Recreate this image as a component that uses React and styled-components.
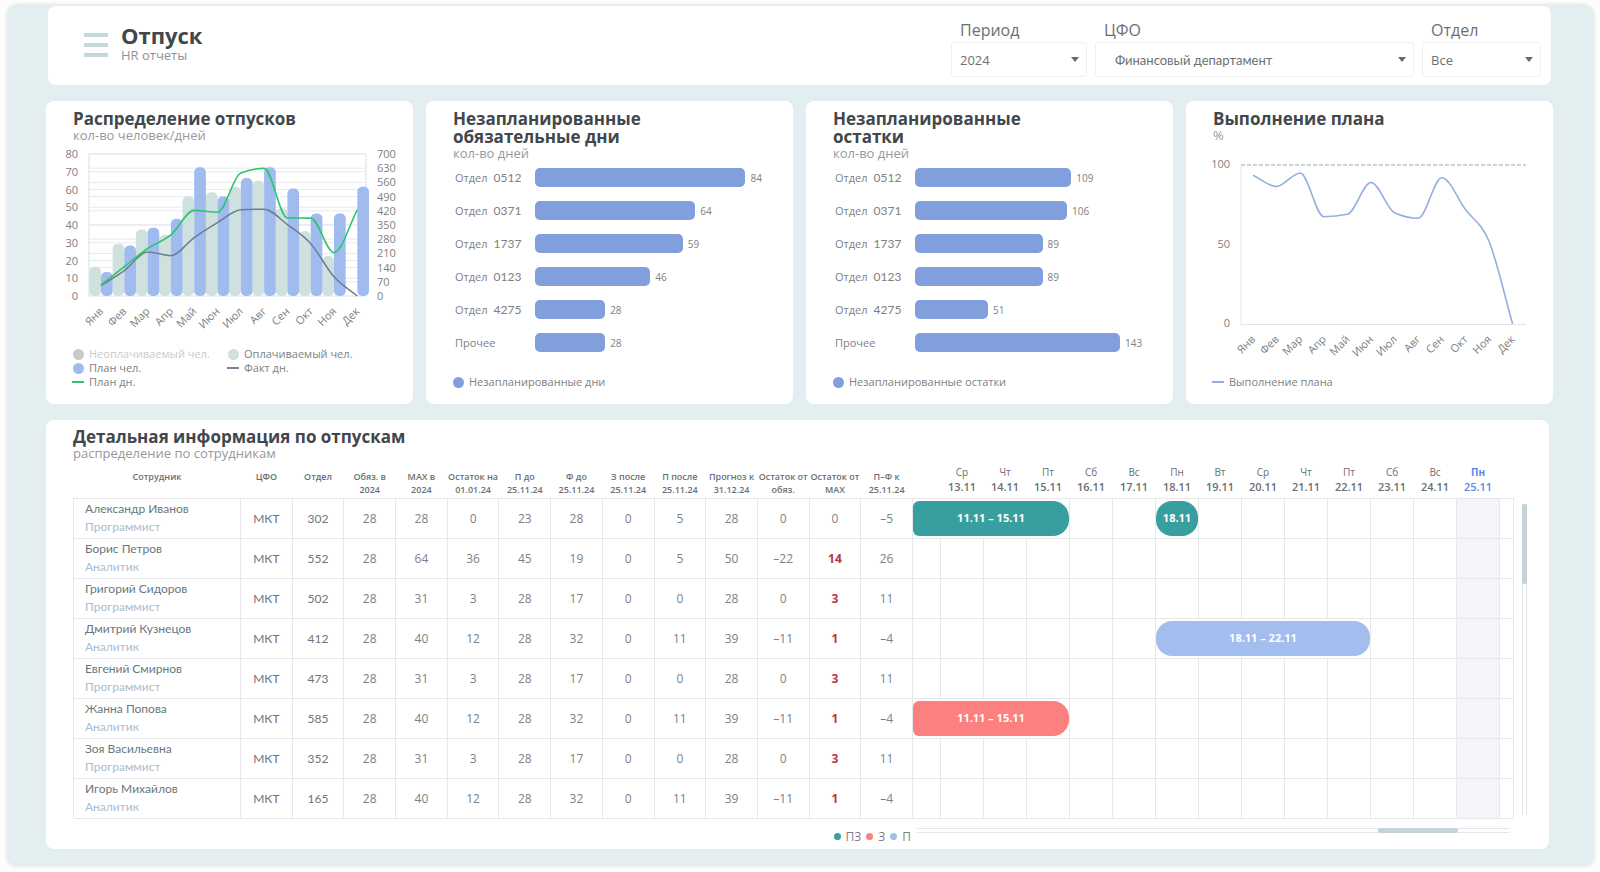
import React, { useState } from 'react';
import styled, { createGlobalStyle } from 'styled-components';

const GlobalStyle = createGlobalStyle`
  * {
    box-sizing: border-box;
  }

  body {
    margin: 0;
    background: #fdfdfd;
    color: #7d8184;
    font-family: 'Open Sans', 'Noto Sans', sans-serif;
    font-size: 12px;
  }
`;

const Page = styled.main`
  display: flex;
  flex-direction: column;
  gap: 16px;
  margin: 5px 6px 5px 7px;
  padding: 1px 41px 17px 39px;
  background: #e3eef0;
  border-radius: 10px;
  box-shadow: 0 0 4px rgba(0, 0, 0, 0.14);
`;

const Header = styled.header`
  display: flex;
  align-items: flex-start;
  margin: 0 2px;
  padding: 13px 10px 8px 36px;
  background: white;
  border-radius: 8px;
`;

const MenuButton = styled.button`
  display: flex;
  flex-direction: column;
  gap: 6px;
  margin: 14px 13px 0 0;
  padding: 0;
  border: none;
  background: none;
  cursor: pointer;
`;

const MenuLine = styled.span`
  width: 24px;
  height: 4px;
  background: #c5d6dc;
`;

const Heading = styled.div`
  flex: 1;
  padding-top: 3px;
`;

const PageTitle = styled.h1`
  margin: 0;
  color: #42474b;
  font-size: 22px;
  line-height: 26px;
`;

const PageSubtitle = styled.div`
  color: #8f9294;
  font-size: 13px;
  line-height: 14px;
`;

const Filters = styled.div`
  display: flex;
  gap: 8px;
`;

const Filter = styled.label`
  width: ${({ $width }) => $width}px;
`;

const FilterLabel = styled.div`
  padding-left: 9px;
  color: #6b6f72;
  font-size: 16px;
  line-height: 23px;
`;

const SelectBox = styled.div`
  position: relative;

  svg {
    position: absolute;
    top: 15px;
    right: 8px;
    pointer-events: none;
  }
`;

const Select = styled.select`
  width: 100%;
  height: 35px;
  padding: 0 24px 0 ${({ $inset }) => $inset || 8}px;
  border: 1px solid #f0f1f2;
  border-radius: 3px;
  background: white;
  color: #6b6f72;
  font-family: ${({ $inset }) => ($inset ? 'Lato' : "'Open Sans'")}, sans-serif;
  font-size: 13px;
  appearance: none;
`;

const Cards = styled.div`
  display: grid;
  grid-template-columns: repeat(4, 1fr);
  gap: 13px;
`;

const Card = styled.section`
  display: flex;
  flex-direction: column;
  min-height: 303px;
  padding: 9px 0 15px;
  background: white;
  border-radius: 8px;
`;

const CardTitle = styled.h2`
  max-width: 240px;
  margin: 0 26px 0 27px;
  color: #42474b;
  font-size: 17px;
  line-height: 18px;
`;

const CardSubtitle = styled.div`
  margin: 0 27px;
  color: #96999b;
  font-size: 13px;
  line-height: 14px;
`;

const Chart = styled.svg`
  display: block;
  width: 100%;
  height: auto;
  margin-top: 4px;

  text {
    fill: #7d8184;
    font-size: 11px;
  }
`;

const Legend = styled.ul`
  display: grid;
  grid-template-columns: ${({ $columns }) => $columns || 'auto'};
  margin: auto 26px 0;
  padding: 0;
  list-style: none;
`;

const LegendItem = styled.li`
  display: flex;
  align-items: center;
  gap: 5px;
  color: ${({ $muted }) => ($muted ? '#c9cbcc' : '#7d8184')};
  font-size: 11px;
  line-height: 14px;
  white-space: nowrap;
`;

const Dot = styled.span`
  width: 11px;
  height: 11px;
  margin-left: 1px;
  border-radius: 50%;
  background: ${({ $color }) => $color};
`;

const Dash = styled.span`
  width: 12px;
  height: 2px;
  background: ${({ $color }) => $color};
`;

const BarRows = styled.div`
  display: flex;
  flex-direction: column;
  gap: 14px;
  margin: 8px 10px 0 29px;
`;

const BarRow = styled.div`
  display: grid;
  grid-template-columns: 80px 1fr;
  align-items: center;
  height: 19px;
  font-size: 11px;
`;

const BarName = styled.div`
  display: flex;
  align-items: baseline;
  gap: 6px;
`;

const DepartmentCode = styled.span`
  font-family: Lato, sans-serif;
  font-size: 12px;
`;

const BarTrack = styled.div`
  display: flex;
  align-items: center;
  gap: 5px;
  font-size: 10px;
`;

const Bar = styled.div`
  height: 19px;
  border-radius: 5px;
  background: #819fdc;
`;

const Details = styled.section`
  margin-right: 4px;
  padding: 8px 22px 4px 27px;
  background: white;
  border-radius: 8px;
`;

const DetailsTitle = styled(CardTitle)`
  max-width: none;
  margin: 0;
`;

const DetailsSubtitle = styled(CardSubtitle)`
  margin: 0;
`;

const TableArea = styled.div`
  display: flex;
  gap: 8px;
  margin-top: 8px;
`;

const Table = styled.table`
  flex: 1;
  width: 100%;
  border-collapse: collapse;
  table-layout: fixed;
`;

const ColumnHead = styled.th`
  height: 30px;
  padding: 2px 0 0;
  color: #6b6f72;
  font-size: 9px;
  font-weight: 600;
  line-height: 13px;
  vertical-align: top;
  white-space: nowrap;
`;

const DayHead = styled(ColumnHead)`
  padding: 0 0 3px;
  color: ${({ $today }) => ($today ? '#5b86e5' : '#6b6f72')};
  font-size: 11px;
  line-height: 15px;
`;

const Weekday = styled.div`
  margin-top: -3px;
  font-size: 10px;
  font-weight: ${({ $today }) => ($today ? 700 : 400)};
  line-height: 14px;
`;

const Cell = styled.td`
  height: 40px;
  padding: 0;
  border: 1px solid #e6e8ea;
  background: ${({ $today }) => ($today ? '#f4f5fa' : 'none')};
  color: ${({ $alert }) => ($alert ? '#b3393d' : '#7d8184')};
  font-weight: ${({ $alert }) => ($alert ? 700 : 400)};
  text-align: center;
`;

const TextCell = styled(Cell)`
  color: #6b767c;
  font-family: Lato, sans-serif;
`;

const EmployeeCell = styled(TextCell)`
  padding-left: 11px;
  line-height: 18px;
  text-align: left;
`;

const Role = styled.div`
  color: #abbecb;
`;

const Vacation = styled.div`
  height: 35px;
  border-radius: ${({ $cut }) => ($cut ? '6px 16px 16px 6px' : '16px')};
  background: ${({ $color }) => $color};
  color: white;
  font-size: 11px;
  font-weight: 700;
  line-height: 34px;
`;

const VerticalScroll = styled.div`
  width: 5px;
  margin: 36px 0 4px;
  border: solid #dfe7ec;
  border-width: 0 1px;
`;

const VerticalThumb = styled.div`
  width: 5px;
  height: 80px;
  margin-left: -1px;
  border-radius: 2px;
  background: #c5d3d9;
`;

const Footer = styled.div`
  display: grid;
  grid-template-columns: 840fr 614fr;
`;

const StatusLegend = styled.ul`
  display: flex;
  justify-content: flex-end;
  gap: 5px;
  margin: 10px 2px 0 0;
  padding: 0;
  list-style: none;
  line-height: 16px;
`;

const StatusItem = styled.li`
  display: flex;
  align-items: center;
  gap: 5px;
`;

const StatusDot = styled.span`
  width: 7px;
  height: 7px;
  border-radius: 50%;
  background: ${({ $color }) => $color};
`;

const HorizontalScroll = styled.div`
  height: 5px;
  margin: 9px 18px 0 4px;
  padding-left: 75%;
  border: solid #dfe7ec;
  border-width: 1px 0;
`;

const HorizontalThumb = styled.div`
  width: 80px;
  height: 5px;
  margin-top: -1px;
  border-radius: 2px;
  background: #c5d3d9;
`;

const MONTHS = ['Янв', 'Фев', 'Мар', 'Апр', 'Май', 'Июн', 'Июл', 'Авг', 'Сен', 'Окт', 'Ноя', 'Дек'];

const PAID = [16.5, 29.5, 37.5, 34.5, 56, 58.5, 61.5, 65, 49.5, 36.5, 22.5, 0];
const PLAN = [13.5, 28.5, 38.5, 43.5, 72.5, 56, 66.5, 72.5, 60.5, 46.5, 46.5, 61.5];
const PLAN_DAYS = [54, 145, 234, 301, 422, 413, 606, 629, 385, 384, 214, 425];
const FACT_DAYS = [51, 125, 217, 199, 288, 362, 425, 428, 352, 258, 95, 0];
const COMPLETION = [93.5, 86.5, 95, 67.5, 69, 89, 70, 66.5, 92, 72, 52, 0];

const UNPLANNED_DAYS = [
  { name: 'Отдел', code: '0512', value: 84 },
  { name: 'Отдел', code: '0371', value: 64 },
  { name: 'Отдел', code: '1737', value: 59 },
  { name: 'Отдел', code: '0123', value: 46 },
  { name: 'Отдел', code: '4275', value: 28 },
  { name: 'Прочее', value: 28 },
];

const UNPLANNED_REST = [
  { name: 'Отдел', code: '0512', value: 109 },
  { name: 'Отдел', code: '0371', value: 106 },
  { name: 'Отдел', code: '1737', value: 89 },
  { name: 'Отдел', code: '0123', value: 89 },
  { name: 'Отдел', code: '4275', value: 51 },
  { name: 'Прочее', value: 143 },
];

const COLUMNS = [
  ['Сотрудник'],
  ['ЦФО'],
  ['Отдел'],
  ['Обяз. в', '2024'],
  ['MAX в', '2024'],
  ['Остаток на', '01.01.24'],
  ['П до', '25.11.24'],
  ['Ф до', '25.11.24'],
  ['З после', '25.11.24'],
  ['П после', '25.11.24'],
  ['Прогноз к', '31.12.24'],
  ['Остаток от', 'обяз.'],
  ['Остаток от', 'MAX'],
  ['П–Ф к', '25.11.24'],
];

const DAYS = [
  ['Ср', '13.11'],
  ['Чт', '14.11'],
  ['Пт', '15.11'],
  ['Сб', '16.11'],
  ['Вс', '17.11'],
  ['Пн', '18.11'],
  ['Вт', '19.11'],
  ['Ср', '20.11'],
  ['Чт', '21.11'],
  ['Пт', '22.11'],
  ['Сб', '23.11'],
  ['Вс', '24.11'],
  ['Пн', '25.11'],
];

// the first and the last slot are the cut-off days at the edges of the calendar
const SLOTS = DAYS.length + 2;
const TODAY_SLOT = 13;

const TEAL = '#389fa1';
const RED = '#fd8080';
const BLUE = '#a2bdee';

const EMPLOYEES = [
  {
    name: 'Александр Иванов', role: 'Программист', department: '302',
    values: ['28', '28', '0', '23', '28', '0', '5', '28', '0', '0', '–5'],
    vacations: [
      { slot: 0, span: 4, label: '11.11 – 15.11', color: TEAL },
      { slot: 6, span: 1, label: '18.11', color: TEAL },
    ],
  },
  {
    name: 'Борис Петров', role: 'Аналитик', department: '552',
    values: ['28', '64', '36', '45', '19', '0', '5', '50', '–22', '14', '26'],
  },
  {
    name: 'Григорий Сидоров', role: 'Программист', department: '502',
    values: ['28', '31', '3', '28', '17', '0', '0', '28', '0', '3', '11'],
  },
  {
    name: 'Дмитрий Кузнецов', role: 'Аналитик', department: '412',
    values: ['28', '40', '12', '28', '32', '0', '11', '39', '–11', '1', '–4'],
    vacations: [{ slot: 6, span: 5, label: '18.11 – 22.11', color: BLUE }],
  },
  {
    name: 'Евгений Смирнов', role: 'Программист', department: '473',
    values: ['28', '31', '3', '28', '17', '0', '0', '28', '0', '3', '11'],
  },
  {
    name: 'Жанна Попова', role: 'Аналитик', department: '585',
    values: ['28', '40', '12', '28', '32', '0', '11', '39', '–11', '1', '–4'],
    vacations: [{ slot: 0, span: 4, label: '11.11 – 15.11', color: RED }],
  },
  {
    name: 'Зоя Васильевна', role: 'Программист', department: '352',
    values: ['28', '31', '3', '28', '17', '0', '0', '28', '0', '3', '11'],
  },
  {
    name: 'Игорь Михайлов', role: 'Аналитик', department: '165',
    values: ['28', '40', '12', '28', '32', '0', '11', '39', '–11', '1', '–4'],
  },
];

// monotone cubic curve through equally spaced points
const smoothPath = (values, getX, getY) => {
  const points = values.map((value, i) => [getX(i), getY(value)]);
  const step = points[1][0] - points[0][0];
  const slopes = points.slice(1).map((p, i) => (p[1] - points[i][1]) / step);
  const tangents = points.map((_, i) => {
    if (i === 0) return slopes[0];
    if (i === points.length - 1) return slopes[i - 1];
    const a = slopes[i - 1];
    const b = slopes[i];
    if (a * b <= 0) return 0;
    return Math.sign(a) * Math.min(Math.abs(a), Math.abs(b), Math.abs(a + b) / 4) * 2;
  });

  return points.reduce((path, [x, y], i) => {
    if (i === 0) return `M${x},${y}`;
    const [px, py] = points[i - 1];
    return `${path}C${px + step / 3},${py + (tangents[i - 1] * step) / 3} ${x - step / 3},${y - (tangents[i] * step) / 3} ${x},${y}`;
  }, '');
};

const MonthLabels = ({ getX, y }) =>
  MONTHS.map((month, i) => (
    <text key={month} textAnchor="end" transform={`translate(${getX(i) + 3} ${y}) rotate(-45)`}>
      {month}
    </text>
  ));

const DistributionChart = () => {
  const top = 8;
  const bottom = 150;
  const getX = (i) => 55 + i * 23.3;
  const people = (value) => bottom - (value / 80) * (bottom - top);
  const days = (value) => bottom - (value / 700) * (bottom - top);
  const peopleTicks = [0, 10, 20, 30, 40, 50, 60, 70, 80];
  const dayTicks = [0, 70, 140, 210, 280, 350, 420, 490, 560, 630, 700];

  return (
    <Chart viewBox="0 0 367 186" role="img" aria-label="Распределение отпусков">
      <g stroke="#e6e9ef">
        {peopleTicks.map((tick) => (
          <line key={tick} x1="43" x2="320" y1={people(tick)} y2={people(tick)} />
        ))}
        {dayTicks.map((tick) => (
          <line key={tick} x1="43" x2="320" y1={days(tick)} y2={days(tick)} />
        ))}
      </g>
      <path d="M43,8V150M320,8V150" stroke="#d9dfeb" />
      {PAID.map((value, i) => value > 0 && (
        <rect key={i} x={getX(i) - 11.7} y={people(value)} width="11.7" height={bottom - people(value)} rx="5" fill="#cfe1de" />
      ))}
      {PLAN.map((value, i) => (
        <rect key={i} x={getX(i)} y={people(value)} width="11.7" height={bottom - people(value)} rx="5" fill="#a0bcee" />
      ))}
      <path d={smoothPath(FACT_DAYS, getX, days)} fill="none" stroke="#6f7d92" strokeWidth="1.5" />
      <path d={smoothPath(PLAN_DAYS, getX, days)} fill="none" stroke="#2fc46e" strokeWidth="1.6" />
      {peopleTicks.map((tick) => (
        <text key={tick} x="32" y={people(tick) + 4} textAnchor="end">{tick}</text>
      ))}
      {dayTicks.map((tick) => (
        <text key={tick} x="331" y={days(tick) + 4}>{tick}</text>
      ))}
      <MonthLabels getX={getX} y={166} />
    </Chart>
  );
};

const CompletionChart = () => {
  const top = 19;
  const bottom = 178;
  const getX = (i) => 67 + i * 23.6;
  const getY = (value) => bottom - (value / 100) * (bottom - top);

  return (
    <Chart viewBox="0 0 367 216" role="img" aria-label="Выполнение плана">
      <path d="M55,19V178.500H340" fill="none" stroke="#e2e4e7" />
      <line x1="55" x2="340" y1="19" y2="19" stroke="#b9c4cf" strokeWidth="1.5" strokeDasharray="4 2" />
      <path d={smoothPath(COMPLETION, getX, getY)} fill="none" stroke="#94aede" strokeWidth="1.6" />
      {[0, 50, 100].map((tick) => (
        <text key={tick} x="44" y={getY(tick) + 3} textAnchor="end">{tick}</text>
      ))}
      <MonthLabels getX={getX} y={194} />
    </Chart>
  );
};

const BarList = ({ items, max }) => (
  <BarRows>
    {items.map(({ name, code, value }) => (
      <BarRow key={code || name}>
        <BarName>
          {name}
          {code && <DepartmentCode>{code}</DepartmentCode>}
        </BarName>
        <BarTrack>
          <Bar style={{ width: `${(value / max) * 100}%` }} />
          {value}
        </BarTrack>
      </BarRow>
    ))}
  </BarRows>
);

const FilterSelect = ({ label, width, inset, options }) => {
  const [value, setValue] = useState(options[0]);

  return (
    <Filter $width={width}>
      <FilterLabel>{label}</FilterLabel>
      <SelectBox>
        <Select $inset={inset} value={value} onChange={(e) => setValue(e.target.value)}>
          {options.map((option) => (
            <option key={option}>{option}</option>
          ))}
        </Select>
        <svg width="8" height="5" viewBox="0 0 8 5">
          <path d="M0,0H8L4,5Z" fill="#666a6d" />
        </svg>
      </SelectBox>
    </Filter>
  );
};

const CalendarCells = ({ vacations = [] }) => {
  const cells = [];
  let slot = 0;
  while (slot < SLOTS) {
    const current = slot;
    const vacation = vacations.find((item) => item.slot === current);
    const span = vacation ? vacation.span : 1;
    cells.push(
      <Cell key={slot} colSpan={span} $today={slot === TODAY_SLOT}>
        {vacation && (
          <Vacation $color={vacation.color} $cut={slot === 0}>{vacation.label}</Vacation>
        )}
      </Cell>
    );
    slot += span;
  }
  return cells;
};

const App = () => (
  <>
    <GlobalStyle />
    <Page>
      <Header>
        <MenuButton type="button" aria-label="Меню">
          <MenuLine />
          <MenuLine />
          <MenuLine />
        </MenuButton>
        <Heading>
          <PageTitle>Отпуск</PageTitle>
          <PageSubtitle>HR отчеты</PageSubtitle>
        </Heading>
        <Filters>
          <FilterSelect label="Период" width={136} options={['2024', '2023']} />
          <FilterSelect label="ЦФО" width={319} inset={19} options={['Финансовый департамент']} />
          <FilterSelect label="Отдел" width={119} options={['Все', '302', '552', '502']} />
        </Filters>
      </Header>

      <Cards>
        <Card>
          <CardTitle>Распределение отпусков</CardTitle>
          <CardSubtitle>кол-во человек/дней</CardSubtitle>
          <DistributionChart />
          <Legend $columns="155px auto">
            <LegendItem $muted><Dot $color="#c9c9c9" />Неоплачиваемый чел.</LegendItem>
            <LegendItem><Dot $color="#cfe1de" />Оплачиваемый чел.</LegendItem>
            <LegendItem><Dot $color="#a0bcee" />План чел.</LegendItem>
            <LegendItem><Dash $color="#76808f" />Факт дн.</LegendItem>
            <LegendItem><Dash $color="#2fc46e" />План дн.</LegendItem>
          </Legend>
        </Card>

        <Card>
          <CardTitle>Незапланированные обязательные дни</CardTitle>
          <CardSubtitle>кол-во дней</CardSubtitle>
          <BarList items={UNPLANNED_DAYS} max={99} />
          <Legend>
            <LegendItem><Dot $color="#819fdc" />Незапланированные дни</LegendItem>
          </Legend>
        </Card>

        <Card>
          <CardTitle>Незапланированные остатки</CardTitle>
          <CardSubtitle>кол-во дней</CardSubtitle>
          <BarList items={UNPLANNED_REST} max={173} />
          <Legend>
            <LegendItem><Dot $color="#819fdc" />Незапланированные остатки</LegendItem>
          </Legend>
        </Card>

        <Card>
          <CardTitle>Выполнение плана</CardTitle>
          <CardSubtitle>%</CardSubtitle>
          <CompletionChart />
          <Legend>
            <LegendItem><Dash $color="#94aede" />Выполнение плана</LegendItem>
          </Legend>
        </Card>
      </Cards>

      <Details>
        <DetailsTitle>Детальная информация по отпускам</DetailsTitle>
        <DetailsSubtitle>распределение по сотрудникам</DetailsSubtitle>
        <TableArea>
          <Table>
            <colgroup>
              <col width="167" />
              {COLUMNS.slice(1).map((_, i) => <col key={i} />)}
              <col width="28" />
              {DAYS.map(([, date]) => <col key={date} width="43" />)}
              <col width="14" />
            </colgroup>
            <thead>
              <tr>
                {COLUMNS.map((lines, i) => (
                  <ColumnHead key={i}>
                    {lines[0]}
                    {lines[1] && <br />}
                    {lines[1]}
                  </ColumnHead>
                ))}
                <DayHead />
                {DAYS.map(([weekday, date], i) => (
                  <DayHead key={date} $today={i + 1 === TODAY_SLOT}>
                    <Weekday $today={i + 1 === TODAY_SLOT}>{weekday}</Weekday>
                    {date}
                  </DayHead>
                ))}
                <DayHead />
              </tr>
            </thead>
            <tbody>
              {EMPLOYEES.map(({ name, role, department, values, vacations }) => (
                <tr key={name}>
                  <EmployeeCell>
                    {name}
                    <Role>{role}</Role>
                  </EmployeeCell>
                  <TextCell>МКТ</TextCell>
                  <TextCell>{department}</TextCell>
                  {values.map((value, i) => (
                    <Cell key={i} $alert={i === 9 && value !== '0'}>{value}</Cell>
                  ))}
                  <CalendarCells vacations={vacations} />
                </tr>
              ))}
            </tbody>
          </Table>
          <VerticalScroll>
            <VerticalThumb />
          </VerticalScroll>
        </TableArea>
        <Footer>
          <StatusLegend>
            <StatusItem><StatusDot $color={TEAL} />ПЗ</StatusItem>
            <StatusItem><StatusDot $color={RED} />З</StatusItem>
            <StatusItem><StatusDot $color={BLUE} />П</StatusItem>
          </StatusLegend>
          <HorizontalScroll>
            <HorizontalThumb />
          </HorizontalScroll>
        </Footer>
      </Details>
    </Page>
  </>
);

export default App;
